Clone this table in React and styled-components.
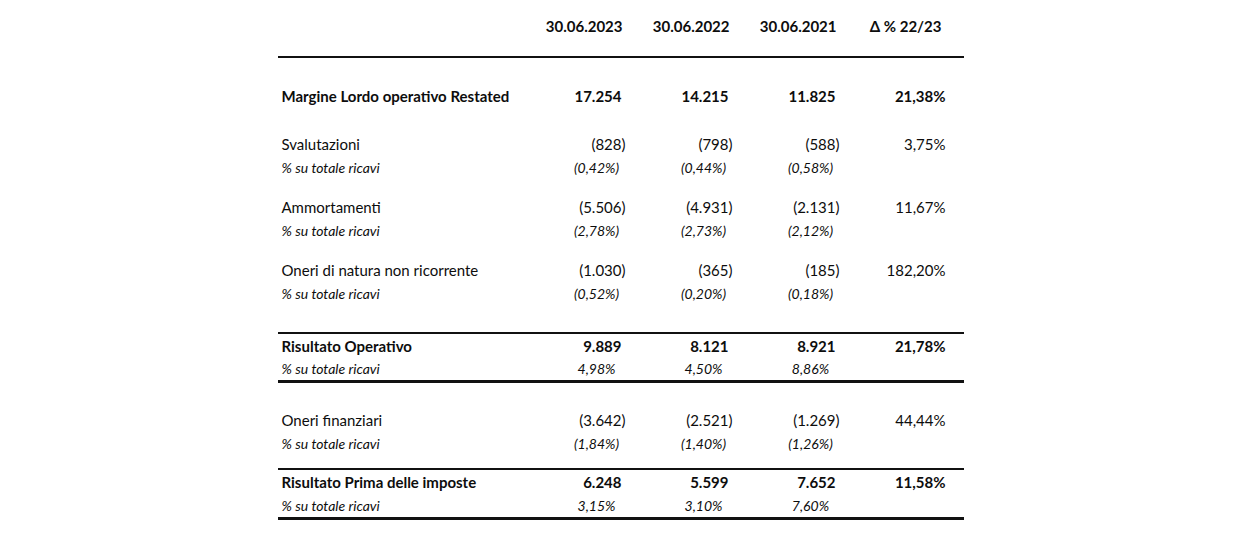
import React from 'react';
import styled, { createGlobalStyle } from 'styled-components';

const GlobalStyle = createGlobalStyle`
  html, body {
    margin: 0;
    background: #ffffff;
  }
  body {
    font-family: Lato, "Open Sans", "Liberation Sans", sans-serif;
    color: #0d0d0d;
  }
`;

const Page = styled.div`
  width: 1241px;
  height: 554px;
  display: flex;
  justify-content: center;
  padding-top: 14px;
  box-sizing: border-box;
`;

const Table = styled.div`
  width: 686px;
  display: flex;
  flex-direction: column;
`;

const Row = styled.div`
  display: grid;
  grid-template-columns: 245px 107px 107px 107px 120px;
  height: ${(p) => p.h || 24}px;
  line-height: ${(p) => p.h || 24}px;
  margin-top: ${(p) => p.gap || 0}px;
  font-size: ${(p) => (p.sub ? 14 : 15)}px;
  font-weight: ${(p) => (p.bold ? 700 : 400)};
  font-style: ${(p) => (p.sub ? 'italic' : 'normal')};
  white-space: nowrap;
`;

const Label = styled.div`
  padding-left: 4px;
`;

const Value = styled.div`
  text-align: right;
  padding-right: ${(p) => (p.last ? 18 : p.paren ? 4 : 8)}px;
`;

const Ratio = styled.div`
  text-align: center;
  padding-left: 41px;
`;

const HeadCell = styled.div`
  text-align: right;
  font-weight: 700;
  padding-right: ${(p) => (p.last ? 22 : 7)}px;
`;

const Rule = styled.div`
  height: ${(p) => p.size}px;
  background: #111;
  margin-top: ${(p) => p.gap || 0}px;
`;

const groups = [
  {
    label: 'Svalutazioni',
    values: ['(828)', '(798)', '(588)'],
    delta: '3,75%',
    ratios: ['(0,42%)', '(0,44%)', '(0,58%)'],
    gap: 24,
  },
  {
    label: 'Ammortamenti',
    values: ['(5.506)', '(4.931)', '(2.131)'],
    delta: '11,67%',
    ratios: ['(2,78%)', '(2,73%)', '(2,12%)'],
    gap: 15,
  },
  {
    label: 'Oneri di natura non ricorrente',
    values: ['(1.030)', '(365)', '(185)'],
    delta: '182,20%',
    ratios: ['(0,52%)', '(0,20%)', '(0,18%)'],
    gap: 15,
  },
];

const RatioRow = ({ ratios, h }) => (
  <Row sub h={h}>
    <Label>% su totale ricavi</Label>
    {ratios.map((r, i) => (
      <Ratio key={i}>{r}</Ratio>
    ))}
    <div />
  </Row>
);

const LineRow = ({ label, values, delta, gap }) => (
  <Row gap={gap}>
    <Label>{label}</Label>
    {values.map((v, i) => (
      <Value key={i} paren>{v}</Value>
    ))}
    <Value last>{delta}</Value>
  </Row>
);

const TotalRow = ({ label, values, delta, gap }) => (
  <Row bold gap={gap}>
    <Label>{label}</Label>
    {values.map((v, i) => (
      <Value key={i}>{v}</Value>
    ))}
    <Value last>{delta}</Value>
  </Row>
);

export default function App() {
  return (
    <>
      <GlobalStyle />
      <Page>
        <Table>
          <Row>
            <div />
            <HeadCell>30.06.2023</HeadCell>
            <HeadCell>30.06.2022</HeadCell>
            <HeadCell>30.06.2021</HeadCell>
            <HeadCell last>Δ % 22/23</HeadCell>
          </Row>
          <Rule size={2} gap={18} />

          <TotalRow
            gap={26}
            label="Margine Lordo operativo Restated"
            values={['17.254', '14.215', '11.825']}
            delta="21,38%"
          />

          {groups.map((g) => (
            <React.Fragment key={g.label}>
              <LineRow label={g.label} values={g.values} delta={g.delta} gap={g.gap} />
              <RatioRow ratios={g.ratios} />
            </React.Fragment>
          ))}

          <Rule size={2} gap={26} />
          <TotalRow
            label="Risultato Operativo"
            values={['9.889', '8.121', '8.921']}
            delta="21,78%"
          />
          <RatioRow ratios={['4,98%', '4,50%', '8,86%']} h={22} />
          <Rule size={3} />

          <LineRow
            gap={25}
            label="Oneri finanziari"
            values={['(3.642)', '(2.521)', '(1.269)']}
            delta="44,44%"
          />
          <RatioRow ratios={['(1,84%)', '(1,40%)', '(1,26%)']} />
          <Rule size={2} gap={12} />

          <TotalRow
            label="Risultato Prima delle imposte"
            values={['6.248', '5.599', '7.652']}
            delta="11,58%"
          />
          <RatioRow ratios={['3,15%', '3,10%', '7,60%']} h={23} />
          <Rule size={3} />
        </Table>
      </Page>
    </>
  );
}
